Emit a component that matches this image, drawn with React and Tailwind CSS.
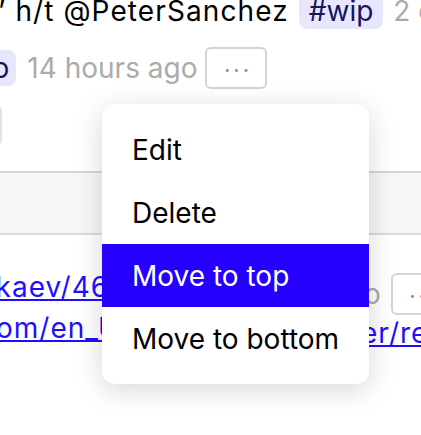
import React from 'react';

const Dots = () => (
  <button className="flex h-[42px] w-[62px] shrink-0 items-center justify-center rounded-[6px] border-2 border-[#d4d4d4] bg-white text-[22px] leading-none tracking-[3px] text-[#8a8a8a]">
    <span className="-mt-[8px] pl-[3px]">...</span>
  </button>
);

const menuItems = ['Edit', 'Delete', 'Move to top', 'Move to bottom'];

export default function App() {
  return (
    <div className="relative h-[435px] w-[421px] overflow-hidden bg-white font-['Inter',sans-serif] text-[28px] text-black">
      {/* first card, cut off at the top */}
      <div className="relative h-[180px] border-b-2 border-[#d6d6d6]">
        <div className="-mt-[7px] -ml-[2px] flex h-[36px] items-center whitespace-nowrap leading-[36px]">
          <span className="tracking-[1.1px]">’ h/t @PeterSanchez</span>
          <span className="ml-[10px] rounded-[8px] bg-[#e8e6fd] px-[10px] leading-[36px] text-[#16145c]">#wip</span>
          <span className="ml-[10px] text-[#ababab]">2 days ago</span>
        </div>
        <div className="mt-[18px] -ml-[75px] flex h-[42px] items-center whitespace-nowrap">
          <span className="rounded-[8px] bg-[#e8e6fd] px-[7px] leading-[36px] text-[#16145c]">#todo</span>
          <span className="ml-[11px] leading-[36px] text-[#ababab]">14 hours ago</span>
          <span className="ml-[8px]"><Dots /></span>
        </div>
        <div className="mt-[16px] -ml-[40px] h-[41px] w-[42px] rounded-[6px] border-2 border-[#e2e2e2]" />
      </div>

      {/* empty grey strip */}
      <div className="h-[62px] border-b-2 border-[#d9d9d9] bg-[#f7f7f7]" />

      {/* second card with links */}
      <div className="flex">
        <div className="w-[363px] shrink-0 overflow-hidden whitespace-nowrap pt-[34px] tracking-[1px] text-[#1f0fff]">
          <div className="-ml-[38px] leading-[36px]">
            <a href="#" className="underline">sokaev/46a1b2c3d4e5f6</a>
          </div>
          <div className="-ml-[21px] mt-[5px] leading-[36px]">
            <a href="#" className="underline">com/en_US/docs/Web</a>
          </div>
        </div>
        <div className="shrink-0 whitespace-nowrap">
          <div className="mt-[38px] flex h-[42px] items-center">
            <span className="-ml-[32px] leading-[36px] text-[#ababab]">ago</span>
            <span className="ml-[10px]"><Dots /></span>
          </div>
          <div className="-ml-[2px] leading-[36px] tracking-[1px] text-[#1f0fff]">
            <a href="#" className="underline">er/repo</a>
          </div>
        </div>
      </div>

      {/* context menu */}
      <div className="absolute left-[102px] top-[104px] w-[267px] rounded-[13px] bg-white py-[14px] shadow-[0_6px_28px_rgba(0,0,0,0.16)]">
        {menuItems.map((item) => (
          <div
            key={item}
            className={`flex h-[63px] items-center whitespace-nowrap px-[30px] text-[28px] ${item === 'Move to top' ? 'bg-[#2600ff] text-white' : 'text-black'}`}
          >
            {item}
          </div>
        ))}
      </div>
    </div>
  );
}
